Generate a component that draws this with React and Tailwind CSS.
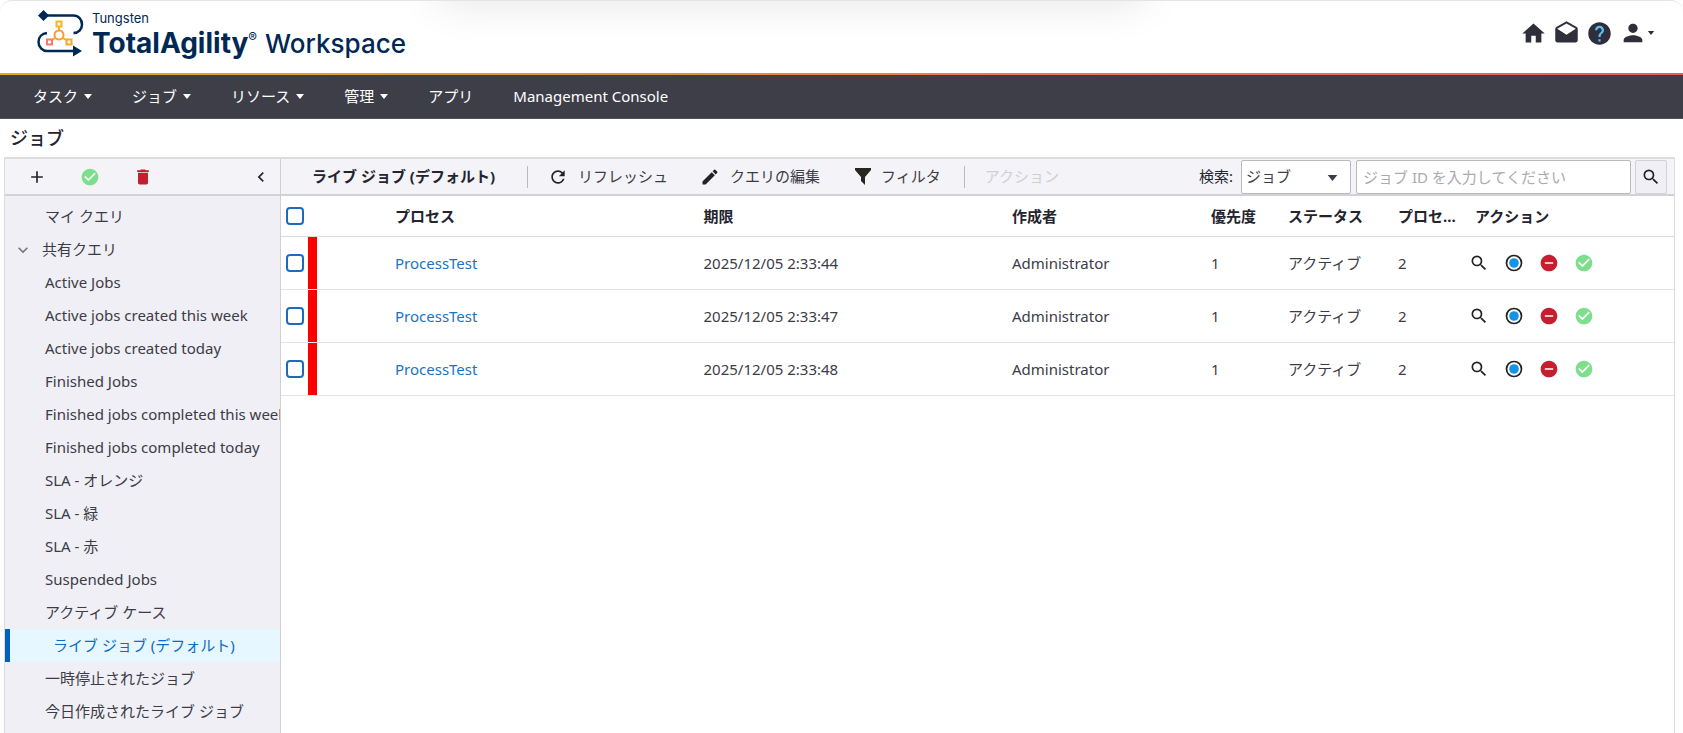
import React, { useState } from 'react';
import { MdHome, MdDrafts, MdHelp, MdPerson, MdAdd, MdCheckCircle, MdDelete, MdChevronLeft, MdExpandMore, MdRefresh, MdEdit, MdSearch, MdRemoveCircle } from 'react-icons/md';

const menu = [
    { label: 'タスク', caret: true },
    { label: 'ジョブ', caret: true },
    { label: 'リソース', caret: true },
    { label: '管理', caret: true },
    { label: 'アプリ', caret: false },
    { label: 'Management Console', caret: false },
];

const queries = [
    'Active Jobs',
    'Active jobs created this week',
    'Active jobs created today',
    'Finished Jobs',
    'Finished jobs completed this week',
    'Finished jobs completed today',
    'SLA - オレンジ',
    'SLA - 緑',
    'SLA - 赤',
    'Suspended Jobs',
    'アクティブ ケース',
    'ライブ ジョブ (デフォルト)',
    '一時停止されたジョブ',
    '今日作成されたライブ ジョブ',
];

const jobs = [
    { id: 1, process: 'ProcessTest', due: '2025/12/05 2:33:44', creator: 'Administrator', priority: 1, status: 'アクティブ', version: 2 },
    { id: 2, process: 'ProcessTest', due: '2025/12/05 2:33:47', creator: 'Administrator', priority: 1, status: 'アクティブ', version: 2 },
    { id: 3, process: 'ProcessTest', due: '2025/12/05 2:33:48', creator: 'Administrator', priority: 1, status: 'アクティブ', version: 2 },
];

const Caret = ({ className }) => (
    <svg viewBox="0 0 8 5" className={className} fill="currentColor" aria-hidden="true">
        <path d="M0 0h8L4 5z" />
    </svg>
);

const Logo = () => (
    <svg viewBox="0 0 48 48" className="h-12 w-12 shrink-0" fill="none" aria-hidden="true">
        <g stroke="#002854" strokeWidth="2.5">
            <path d="M8 6.500H37.500C42.500 6.500 46 10.500 46 15.500C46 20.500 42.500 24 37.500 24" />
            <path d="M11 24C6 24.500 2.500 28 2.500 33C2.500 38 6.500 42 11 42H38" />
        </g>
        <path d="M7.500 1l5.500 5.500L7.500 12L2 6.500zM37 36.500L46 42L37 47.500z" fill="#002854" />
        <g strokeWidth="2">
            <path d="M23 18v4M19 29l-3 2M27 29l3 2" stroke="#fba52a" />
            <circle cx="23" cy="26" r="4.500" stroke="#fb9d2e" />
            <path d="M20.500 12.500h5v5h-5z" stroke="#fbb31c" />
            <path d="M30.500 30.500h5v5h-5z" stroke="#fba52a" />
            <path d="M11 30.500h5v5h-5z" stroke="#f5786b" />
        </g>
    </svg>
);

const StatusIcon = () => (
    <svg viewBox="0 0 20 20" className="size-5" aria-hidden="true">
        <circle cx="10" cy="10" r="7.500" fill="#fff" stroke="#222" strokeWidth="1.700" />
        <circle cx="10" cy="10" r="4.800" fill="#1593e6" />
    </svg>
);

const Checkbox = ({ label, checked, onChange }) => (
    <input
        type="checkbox"
        aria-label={label}
        checked={checked}
        onChange={onChange}
        className="block size-[18px] appearance-none rounded-[4px] border-2 border-[#1d6bbd] bg-white checked:bg-[#1d6bbd]"
    />
);

const Header = () => (
    <header className="relative flex h-[72px] shrink-0 items-start justify-between overflow-hidden rounded-t-xl pr-7 pl-9">
        <div className="absolute -top-10 left-[26%] h-10 w-[42%] shadow-[0_0_44px_rgba(0,0,0,0.12)]" />
        <div className="flex items-start pt-2">
            <Logo />
            <div className="pl-2 font-['Inter',sans-serif] text-[#002854]">
                <div className="text-[13px] leading-[18px]">Tungsten</div>
                <h1 className="flex items-baseline leading-8">
                    <span className="text-[28px] font-bold">TotalAgility</span>
                    <span className="self-start text-[13px] leading-5">®</span>
                    <span className="pl-2 text-[26px] font-medium">Workspace</span>
                </h1>
            </div>
        </div>
        <div className="flex items-center gap-[6px] pt-[18px] text-[#2f2f3b]">
            <button aria-label="ホーム"><MdHome className="size-[27px]" /></button>
            <button aria-label="メッセージ"><MdDrafts className="size-[27px]" /></button>
            <button aria-label="ヘルプ"><MdHelp className="size-[27px] bg-[radial-gradient(circle,#62bdf2_50%,transparent_50%)]" /></button>
            <button aria-label="ユーザー" className="flex items-center">
                <MdPerson className="size-7" />
                <Caret className="h-1 w-2" />
            </button>
        </div>
    </header>
);

const Sidebar = () => {
    const [selected, setSelected] = useState('ライブ ジョブ (デフォルト)');

    return (
        <aside className="w-[276px] shrink-0 overflow-hidden border-r border-[#cfcfd4] bg-[#efeff5]">
            <div className="flex h-[37px] items-center gap-[33px] border-b-2 border-[#d2d2d6] bg-[#f3f3f8] pr-[9px] pl-[22px]">
                <button aria-label="追加"><MdAdd className="size-5" /></button>
                <button aria-label="有効"><MdCheckCircle className="size-5 text-[#7ddf8b]" /></button>
                <button aria-label="削除"><MdDelete className="size-5 text-[#c41e2f]" /></button>
                <button aria-label="閉じる" className="ml-auto"><MdChevronLeft className="size-5" /></button>
            </div>
            <ul className="pt-1 whitespace-nowrap text-[#3c3c46]">
                <li><button className="block h-[33px] pl-10">マイ クエリ</button></li>
                <li>
                    <button className="flex h-[33px] items-center pl-2">
                        <MdExpandMore className="mr-[9px] size-5 text-[#777]" />
                        共有クエリ
                    </button>
                </li>
                {queries.map((query) => (
                    <li key={query}>
                        <button
                            onClick={() => setSelected(query)}
                            className={`block h-[33px] w-full text-left ${query === selected ? 'border-l-[5px] border-[#0062bf] bg-[#e6f7ff] pl-[43px] text-[#0f6cc0]' : 'pl-10'}`}
                        >
                            {query}
                        </button>
                    </li>
                ))}
            </ul>
        </aside>
    );
};

const Toolbar = () => (
    <div className="flex h-[37px] items-center border-b-2 border-[#d2d2d6] bg-[#f3f3f8] pr-[7px] pl-[31px] whitespace-nowrap text-[#3c3c46]">
        <h2 className="font-bold text-[#24242e]">ライブ ジョブ (デフォルト)</h2>
        <span className="mr-5 ml-8 h-[22px] w-px bg-[#bbb]" />
        <button className="mr-8 flex items-center gap-[10px]"><MdRefresh className="size-5 text-[#222]" />リフレッシュ</button>
        <button className="mr-[35px] flex items-center gap-[10px]"><MdEdit className="size-5 text-[#222]" />クエリの編集</button>
        <button className="flex items-center gap-[10px]">
            <svg viewBox="0 0 16 17" className="h-[17px] w-4" fill="#26261f" aria-hidden="true"><path d="M0 0h16v2l-6 7v8l-4-4V9L0 2z" /></svg>
            フィルタ
        </button>
        <span className="mr-5 ml-[23px] h-[22px] w-px bg-[#bbb]" />
        <button disabled className="text-[#cfcfd4]">アクション</button>
        <label htmlFor="search-type" className="ml-auto pr-2 text-[#24242e]">検索:</label>
        <div className="relative">
            <select id="search-type" className="block h-[34px] w-[110px] appearance-none rounded-[2px] border border-[#b9b9be] bg-white pl-1">
                <option>ジョブ</option>
            </select>
            <Caret className="pointer-events-none absolute top-[15px] right-[13px] h-[6px] w-[11px]" />
        </div>
        <input
            type="text"
            aria-label="ジョブ ID"
            placeholder="ジョブ ID を入力してください"
            className="ml-[5px] h-[34px] w-[275px] rounded-[2px] border border-[#b9b9be] bg-white px-[6px] placeholder:text-[#aaaab2]"
        />
        <button aria-label="検索" className="ml-1 flex h-[34px] w-8 items-center justify-center rounded-[2px] border border-[#d2d2d6] bg-[#efeff5]">
            <MdSearch className="size-5 text-[#222]" />
        </button>
    </div>
);

const JobTable = () => {
    const [checked, setChecked] = useState([]);

    const toggle = (id) => {
        setChecked(checked.includes(id) ? checked.filter((c) => c !== id) : [...checked, id]);
    };

    return (
        <table className="w-full table-fixed text-left text-[#3c3c46]">
            <colgroup>
                <col className="w-[27px]" />
                <col className="w-[79px]" />
                <col />
                <col />
                <col className="w-[199px]" />
                <col className="w-[77px]" />
                <col className="w-[110px]" />
                <col className="w-[77px]" />
                <col className="w-[207px]" />
            </colgroup>
            <thead>
                <tr className="h-10 border-b border-[#dcdce0] text-[#24242e]">
                    <th className="pl-[5px]">
                        <Checkbox
                            label="すべて選択"
                            checked={checked.length === jobs.length}
                            onChange={() => setChecked(checked.length === jobs.length ? [] : jobs.map((j) => j.id))}
                        />
                    </th>
                    <th />
                    <th className="pl-2">プロセス</th>
                    <th className="pl-2">期限</th>
                    <th className="pl-2">作成者</th>
                    <th className="pl-2">優先度</th>
                    <th className="pl-2">ステータス</th>
                    <th className="pl-2">プロセ...</th>
                    <th className="pl-2">アクション</th>
                </tr>
            </thead>
            <tbody>
                {jobs.map((job) => (
                    <tr key={job.id} className="h-[53px] border-b border-[#e4e4e6]">
                        <td className="pl-[5px]"><Checkbox label={job.due} checked={checked.includes(job.id)} onChange={() => toggle(job.id)} /></td>
                        <td className="h-[53px]"><div className="h-full w-[9px] bg-[#ff0000]" /></td>
                        <td className="pt-[2px] pl-2"><a href="#" className="text-[#1b73c4]">{job.process}</a></td>
                        <td className="pt-[2px] pl-2">{job.due}</td>
                        <td className="pt-[2px] pl-2">{job.creator}</td>
                        <td className="pt-[2px] pl-2">{job.priority}</td>
                        <td className="pt-[2px] pl-2">{job.status}</td>
                        <td className="pt-[2px] pl-2">{job.version}</td>
                        <td>
                            <div className="flex gap-[15px] pl-[2px]">
                                <button aria-label="表示"><MdSearch className="size-5 text-[#222]" /></button>
                                <button aria-label="状態"><StatusIcon /></button>
                                <button aria-label="停止"><MdRemoveCircle className="size-5 text-[#c41e2f]" /></button>
                                <button aria-label="完了"><MdCheckCircle className="size-5 text-[#7ddf8b]" /></button>
                            </div>
                        </td>
                    </tr>
                ))}
            </tbody>
        </table>
    );
};

const App = () => {
    return (
        <div className="flex h-screen flex-col overflow-hidden rounded-t-xl border-t border-[#e4e4e4] bg-white font-['Noto_Sans','Noto_Sans_CJK_JP',sans-serif] text-[15px] text-[#24242e]">
            <Header />
            <div className="h-[2px] shrink-0 bg-linear-to-r from-[#e8a818] to-[#e0605c]" />
            <nav className="flex h-11 shrink-0 items-center border-b border-[#55505e] bg-[#3e3e48] pl-[33px] text-white">
                {menu.map((item) => (
                    <a key={item.label} href="#" className="mr-10 flex items-center gap-[6px]">
                        {item.label}
                        {item.caret && <Caret className="h-[5px] w-2" />}
                    </a>
                ))}
            </nav>
            <div className="flex h-[38px] shrink-0 items-center pl-[10px] text-lg font-medium">ジョブ</div>
            <main className="mr-2 ml-1 flex min-h-0 flex-1 border-x border-t-2 border-[#dcdce0]">
                <Sidebar />
                <section className="min-w-0 flex-1">
                    <Toolbar />
                    <JobTable />
                </section>
            </main>
        </div>
    );
};

export default App;
